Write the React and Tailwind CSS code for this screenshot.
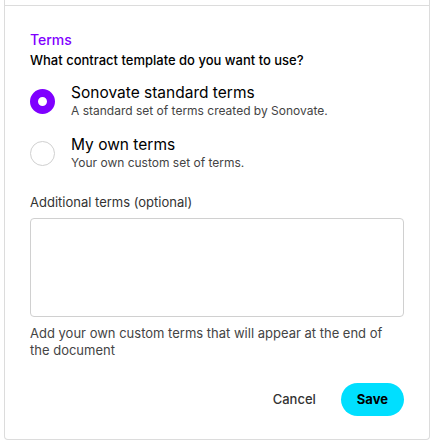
import { useState } from "react";

const options = [
  {
    id: "standard",
    title: "Sonovate standard terms",
    desc: "A standard set of terms created by Sonovate.",
  },
  {
    id: "own",
    title: "My own terms",
    desc: "Your own custom set of terms.",
  },
];

function Radio({ checked }) {
  return checked ? (
    <span className="w-[25px] h-[25px] rounded-full border-[8px] border-[#7f00ff] bg-white shrink-0" />
  ) : (
    <span className="w-[25px] h-[25px] rounded-full border border-[#d0d0d0] bg-white shrink-0" />
  );
}

export default function App() {
  const [choice, setChoice] = useState("standard");
  const [terms, setTerms] = useState("");

  return (
    <div
      className="min-h-screen bg-white"
      style={{ fontFamily: "Inter, 'Liberation Sans', sans-serif" }}
    >
      <div className="ml-[4px] w-[426px] border-x border-[#dcdcdc]">
        <div className="h-[6px] border-b border-[#dcdcdc]" />
      </div>
      <div className="ml-[4px] w-[426px] border-x border-b border-[#dcdcdc] rounded-b-[4px] px-[25px] pt-[24px] pb-[23px]">
        {/* Heading */}
        <h2 className="text-[14px] leading-[20px] font-medium text-[#7f00ff]">Terms</h2>
        <p className="text-[13px] leading-[20px] font-medium text-black">
          What contract template do you want to use?
        </p>

        {/* Options */}
        <div className="mt-[13px] flex flex-col gap-[16px]">
          {options.map((o) => (
            <label
              key={o.id}
              className="flex items-center gap-[16px] cursor-pointer"
              onClick={() => setChoice(o.id)}
            >
              <Radio checked={choice === o.id} />
              <div className="flex flex-col">
                <span className="text-[15.5px] leading-[20px] text-black">{o.title}</span>
                <span className="text-[12px] leading-[16px] text-[#444]">{o.desc}</span>
              </div>
            </label>
          ))}
        </div>

        {/* Additional terms */}
        <label className="block mt-[22px] text-[13px] leading-[18px] text-[#333]">
          Additional terms (optional)
        </label>
        <textarea
          value={terms}
          onChange={(e) => setTerms(e.target.value)}
          className="mt-[7px] block w-full h-[99px] rounded-[4px] border border-[#d0d0d0] resize-none outline-none"
        />
        <p className="mt-[8px] text-[13px] leading-[17px] text-[#444]">
          Add your own custom terms that will appear at the end of the document
        </p>

        {/* Actions */}
        <div className="mt-[24px] flex items-center justify-end gap-[25px]">
          <button className="text-[13px] font-medium text-[#333]">Cancel</button>
          <button className="h-[33px] px-[16px] rounded-full bg-[#00dfff] text-[13px] font-bold text-black">
            Save
          </button>
        </div>
      </div>
    </div>
  );
}
